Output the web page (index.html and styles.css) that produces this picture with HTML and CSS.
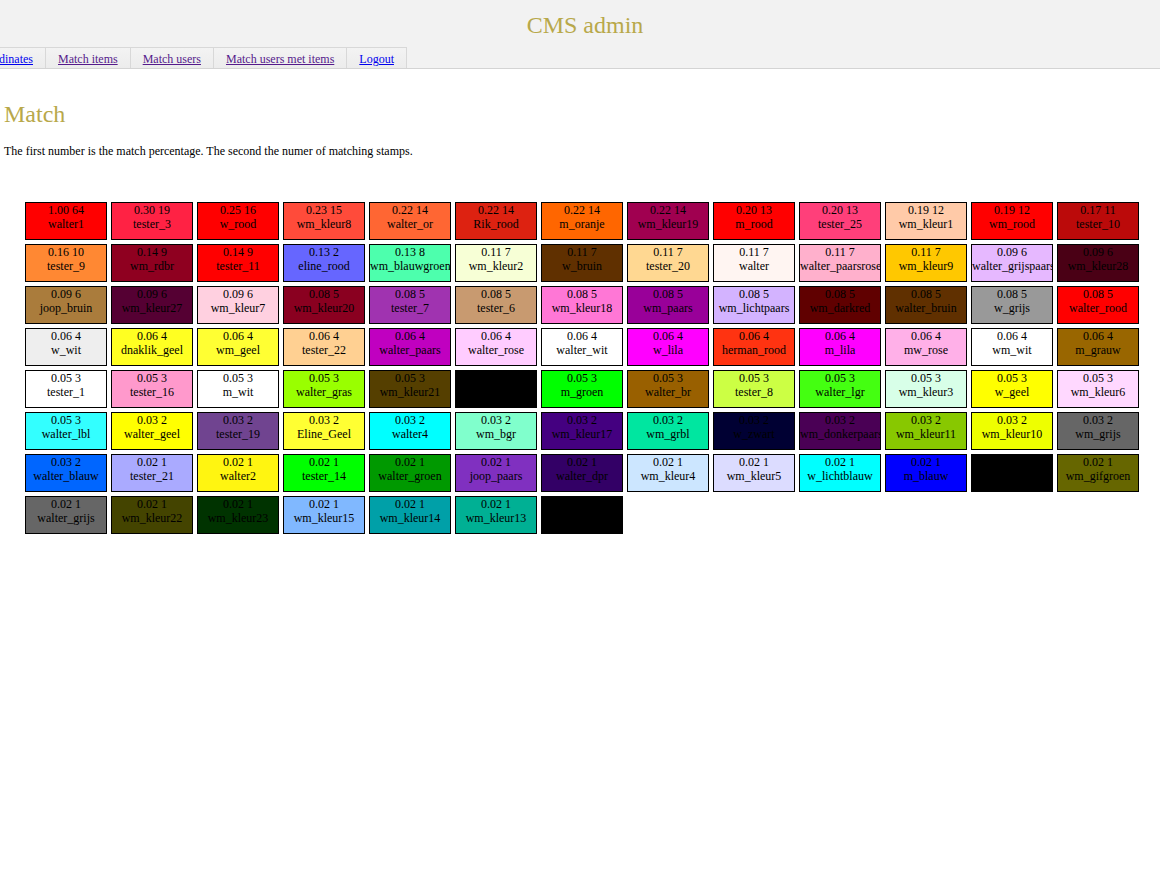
FILE: index.html
```html
<!DOCTYPE html>
<html>
<head>
<meta charset="utf-8">
<title>CMS admin</title>
<link rel="stylesheet" href="styles.css">
</head>
<body>
<div class="header">
  <h1 class="title">CMS admin</h1>
  <ul class="nav">
    <li class="tab"><a class="link" href="#">Coordinates</a></li>
    <li class="tab"><a class="link visited" href="#">Match items</a></li>
    <li class="tab"><a class="link visited" href="#">Match users</a></li>
    <li class="tab"><a class="link visited" href="#">Match users met items</a></li>
    <li class="tab"><a class="link" href="#">Logout</a></li>
  </ul>
</div>
<div class="content">
  <h2 class="heading">Match</h2>
  <p class="intro">The first number is the match percentage. The second the numer of matching stamps.</p>
  <div class="grid">
    <div class="cell" style="background:#ff0000">1.00 64<br>walter1</div>
    <div class="cell" style="background:#ff2244">0.30 19<br>tester_3</div>
    <div class="cell" style="background:#ff0000">0.25 16<br>w_rood</div>
    <div class="cell" style="background:#ff4b3a">0.23 15<br>wm_kleur8</div>
    <div class="cell" style="background:#ff6633">0.22 14<br>walter_or</div>
    <div class="cell" style="background:#dd2211">0.22 14<br>Rik_rood</div>
    <div class="cell" style="background:#ff6600">0.22 14<br>m_oranje</div>
    <div class="cell" style="background:#a00050">0.22 14<br>wm_kleur19</div>
    <div class="cell" style="background:#ff0000">0.20 13<br>m_rood</div>
    <div class="cell" style="background:#ff3f7a">0.20 13<br>tester_25</div>
    <div class="cell" style="background:#ffcaa8">0.19 12<br>wm_kleur1</div>
    <div class="cell" style="background:#ff0000">0.19 12<br>wm_rood</div>
    <div class="cell" style="background:#bb0a0a">0.17 11<br>tester_10</div>

    <div class="cell" style="background:#ff8833">0.16 10<br>tester_9</div>
    <div class="cell" style="background:#8f0020">0.14 9<br>wm_rdbr</div>
    <div class="cell" style="background:#ff0000">0.14 9<br>tester_11</div>
    <div class="cell" style="background:#6666ff">0.13 2<br>eline_rood</div>
    <div class="cell" style="background:#4dffad">0.13 8<br>wm_blauwgroen</div>
    <div class="cell" style="background:#f7ffd6">0.11 7<br>wm_kleur2</div>
    <div class="cell" style="background:#603000">0.11 7<br>w_bruin</div>
    <div class="cell" style="background:#ffd892">0.11 7<br>tester_20</div>
    <div class="cell" style="background:#fff5f2">0.11 7<br>walter</div>
    <div class="cell" style="background:#ffb0cc">0.11 7<br>walter_paarsrose</div>
    <div class="cell" style="background:#ffc800">0.11 7<br>wm_kleur9</div>
    <div class="cell" style="background:#e6b8ff">0.09 6<br>walter_grijspaars</div>
    <div class="cell" style="background:#4a0015">0.09 6<br>wm_kleur28</div>

    <div class="cell" style="background:#aa7c3c">0.09 6<br>joop_bruin</div>
    <div class="cell" style="background:#550033">0.09 6<br>wm_kleur27</div>
    <div class="cell" style="background:#ffd0e0">0.09 6<br>wm_kleur7</div>
    <div class="cell" style="background:#8a0020">0.08 5<br>wm_kleur20</div>
    <div class="cell" style="background:#a033b0">0.08 5<br>tester_7</div>
    <div class="cell" style="background:#c89a70">0.08 5<br>tester_6</div>
    <div class="cell" style="background:#ff77d6">0.08 5<br>wm_kleur18</div>
    <div class="cell" style="background:#990099">0.08 5<br>wm_paars</div>
    <div class="cell" style="background:#d3b3ff">0.08 5<br>wm_lichtpaars</div>
    <div class="cell" style="background:#600000">0.08 5<br>wm_darkred</div>
    <div class="cell" style="background:#603000">0.08 5<br>walter_bruin</div>
    <div class="cell" style="background:#999999">0.08 5<br>w_grijs</div>
    <div class="cell" style="background:#ff0000">0.08 5<br>walter_rood</div>

    <div class="cell" style="background:#eeeeee">0.06 4<br>w_wit</div>
    <div class="cell" style="background:#ffff22">0.06 4<br>dnaklik_geel</div>
    <div class="cell" style="background:#ffff33">0.06 4<br>wm_geel</div>
    <div class="cell" style="background:#ffd092">0.06 4<br>tester_22</div>
    <div class="cell" style="background:#c000c0">0.06 4<br>walter_paars</div>
    <div class="cell" style="background:#ffccff">0.06 4<br>walter_rose</div>
    <div class="cell" style="background:#ffffff">0.06 4<br>walter_wit</div>
    <div class="cell" style="background:#ff00ff">0.06 4<br>w_lila</div>
    <div class="cell" style="background:#ff3311">0.06 4<br>herman_rood</div>
    <div class="cell" style="background:#ff00ff">0.06 4<br>m_lila</div>
    <div class="cell" style="background:#ffb0e8">0.06 4<br>mw_rose</div>
    <div class="cell" style="background:#ffffff">0.06 4<br>wm_wit</div>
    <div class="cell" style="background:#996600">0.06 4<br>m_grauw</div>

    <div class="cell" style="background:#ffffff">0.05 3<br>tester_1</div>
    <div class="cell" style="background:#ff99cc">0.05 3<br>tester_16</div>
    <div class="cell" style="background:#ffffff">0.05 3<br>m_wit</div>
    <div class="cell" style="background:#99ff00">0.05 3<br>walter_gras</div>
    <div class="cell" style="background:#553f00">0.05 3<br>wm_kleur21</div>
    <div class="cell" style="background:#000000"></div>
    <div class="cell" style="background:#00ff00">0.05 3<br>m_groen</div>
    <div class="cell" style="background:#996000">0.05 3<br>walter_br</div>
    <div class="cell" style="background:#ccff44">0.05 3<br>tester_8</div>
    <div class="cell" style="background:#44ff11">0.05 3<br>walter_lgr</div>
    <div class="cell" style="background:#d8ffe8">0.05 3<br>wm_kleur3</div>
    <div class="cell" style="background:#ffff00">0.05 3<br>w_geel</div>
    <div class="cell" style="background:#ffd8ff">0.05 3<br>wm_kleur6</div>

    <div class="cell" style="background:#33ffff">0.05 3<br>walter_lbl</div>
    <div class="cell" style="background:#ffff00">0.03 2<br>walter_geel</div>
    <div class="cell" style="background:#704490">0.03 2<br>tester_19</div>
    <div class="cell" style="background:#ffff33">0.03 2<br>Eline_Geel</div>
    <div class="cell" style="background:#00ffff">0.03 2<br>walter4</div>
    <div class="cell" style="background:#80ffcc">0.03 2<br>wm_bgr</div>
    <div class="cell" style="background:#440080">0.03 2<br>wm_kleur17</div>
    <div class="cell" style="background:#00e6a0">0.03 2<br>wm_grbl</div>
    <div class="cell" style="background:#000033">0.03 2<br>w_zwart</div>
    <div class="cell" style="background:#4a0055">0.03 2<br>wm_donkerpaars</div>
    <div class="cell" style="background:#88c800">0.03 2<br>wm_kleur11</div>
    <div class="cell" style="background:#eeff00">0.03 2<br>wm_kleur10</div>
    <div class="cell" style="background:#666666">0.03 2<br>wm_grijs</div>

    <div class="cell" style="background:#0066ff">0.03 2<br>walter_blauw</div>
    <div class="cell" style="background:#aaaaff">0.02 1<br>tester_21</div>
    <div class="cell" style="background:#fff511">0.02 1<br>walter2</div>
    <div class="cell" style="background:#00ff00">0.02 1<br>tester_14</div>
    <div class="cell" style="background:#009900">0.02 1<br>walter_groen</div>
    <div class="cell" style="background:#8030c0">0.02 1<br>joop_paars</div>
    <div class="cell" style="background:#330066">0.02 1<br>walter_dpr</div>
    <div class="cell" style="background:#cce6ff">0.02 1<br>wm_kleur4</div>
    <div class="cell" style="background:#dcdcff">0.02 1<br>wm_kleur5</div>
    <div class="cell" style="background:#00ffff">0.02 1<br>w_lichtblauw</div>
    <div class="cell" style="background:#0000ff">0.02 1<br>m_blauw</div>
    <div class="cell" style="background:#000000"></div>
    <div class="cell" style="background:#666600">0.02 1<br>wm_gifgroen</div>

    <div class="cell" style="background:#666666">0.02 1<br>walter_grijs</div>
    <div class="cell" style="background:#444400">0.02 1<br>wm_kleur22</div>
    <div class="cell" style="background:#003300">0.02 1<br>wm_kleur23</div>
    <div class="cell" style="background:#80b8ff">0.02 1<br>wm_kleur15</div>
    <div class="cell" style="background:#00a0a8">0.02 1<br>wm_kleur14</div>
    <div class="cell" style="background:#00b094">0.02 1<br>wm_kleur13</div>
    <div class="cell" style="background:#000000"></div>
  </div>
</div>
</body>
</html>
```

FILE: styles.css
```css
html, body {
  margin: 0;
  padding: 0;
  background: #ffffff;
  font-family: "Liberation Serif", "Times New Roman", serif;
  color: #000;
}

.header {
  background: #f2f2f2;
  border-bottom: 1px solid #d4d4d4;
  padding-top: 11px;
  overflow: hidden;
}

.title {
  margin: 0 0 8px 0;
  padding-left: 10px;
  text-align: center;
  font-size: 24px;
  line-height: 28px;
  font-weight: normal;
  color: #b8a84a;
}

.nav {
  list-style: none;
  margin: 0 0 0 -37px;
  padding: 0;
  display: flex;
}

.tab {
  border-top: 1px solid #d8d8d8;
  border-right: 1px solid #d8d8d8;
  padding: 1px 12px 0 12px;
  height: 19px;
  line-height: 20px;
  font-size: 12px;
  background: linear-gradient(#f3f3f3, #ececec);
  white-space: nowrap;
}

.link {
  color: #0000ee;
  text-decoration: underline;
}

.link.visited {
  color: #551a8b;
}

.content {
  padding-left: 4px;
}

.heading {
  margin: 31px 0 0 0;
  font-size: 24px;
  line-height: 28px;
  font-weight: normal;
  color: #b8a84a;
}

.intro {
  margin: 16px 0 0 0;
  font-size: 12px;
  line-height: 14px;
}

.grid {
  margin: 44px 0 0 21px;
  display: grid;
  grid-template-columns: repeat(13, 82px);
  grid-auto-rows: 38px;
  gap: 4px;
}

.cell {
  box-sizing: border-box;
  border: 1px solid #000;
  height: 38px;
  overflow: hidden;
  white-space: nowrap;
  text-align: center;
  font-size: 12px;
  line-height: 14px;
  color: #000;
}
```
